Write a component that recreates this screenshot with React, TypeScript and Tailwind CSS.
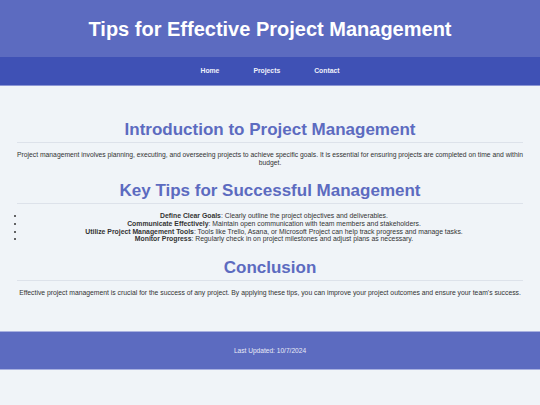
export default function App() {
  const font = { fontFamily: '"Liberation Sans", Arial, sans-serif' };
  return (
    <div className="min-h-[405px] bg-[#f0f4f8] text-[#333]" style={font}>
      <header className="h-[57px] bg-[#5c6bc0] flex items-center justify-center">
        <h1 className="text-[20px] font-bold text-white leading-none">Tips for Effective Project Management</h1>
      </header>
      <nav className="h-[29px] bg-[#3f51b5] flex items-center justify-center gap-[34px] border-b border-[#8c96d4]">
        <a className="text-[6.8px] font-bold text-[#eef0fa]">Home</a>
        <a className="text-[6.8px] font-bold text-[#eef0fa]">Projects</a>
        <a className="text-[6.8px] font-bold text-[#eef0fa]">Contact</a>
      </nav>
      <main className="px-[17px] pt-[33px] pb-[34px] text-center">
        <h2 className="text-[17px] leading-[21px] font-bold text-[#5c6bc0] pb-[2px] border-b border-[#dde2ea]">Introduction to Project Management</h2>
        <p className="mt-[8px] text-[6.75px] leading-[8px]">Project management involves planning, executing, and overseeing projects to achieve specific goals. It is essential for ensuring projects are completed on time and within budget.</p>
        <h2 className="mt-[13px] text-[17px] leading-[21px] font-bold text-[#5c6bc0] pb-[2px] border-b border-[#dde2ea]">Key Tips for Successful Management</h2>
        <ul className="mt-[8px] list-disc pl-[8px] text-[6.85px] leading-[7.8px]">
          <li><strong>Define Clear Goals</strong>: Clearly outline the project objectives and deliverables.</li>
          <li><strong>Communicate Effectively</strong>: Maintain open communication with team members and stakeholders.</li>
          <li><strong>Utilize Project Management Tools</strong>: Tools like Trello, Asana, or Microsoft Project can help track progress and manage tasks.</li>
          <li><strong>Monitor Progress</strong>: Regularly check in on project milestones and adjust plans as necessary.</li>
        </ul>
        <h2 className="mt-[14px] text-[17px] leading-[21px] font-bold text-[#5c6bc0] pb-[2px] border-b border-[#dde2ea]">Conclusion</h2>
        <p className="mt-[8px] text-[6.8px] leading-[8px]">Effective project management is crucial for the success of any project. By applying these tips, you can improve your project outcomes and ensure your team's success.</p>
      </main>
      <footer className="h-[39px] bg-[#5c6bc0] border-y border-[#a9b1e0] flex items-center justify-center">
        <p className="text-[6.6px] text-[#e8eaf6]">Last Updated: 10/7/2024</p>
      </footer>
    </div>
  );
}
